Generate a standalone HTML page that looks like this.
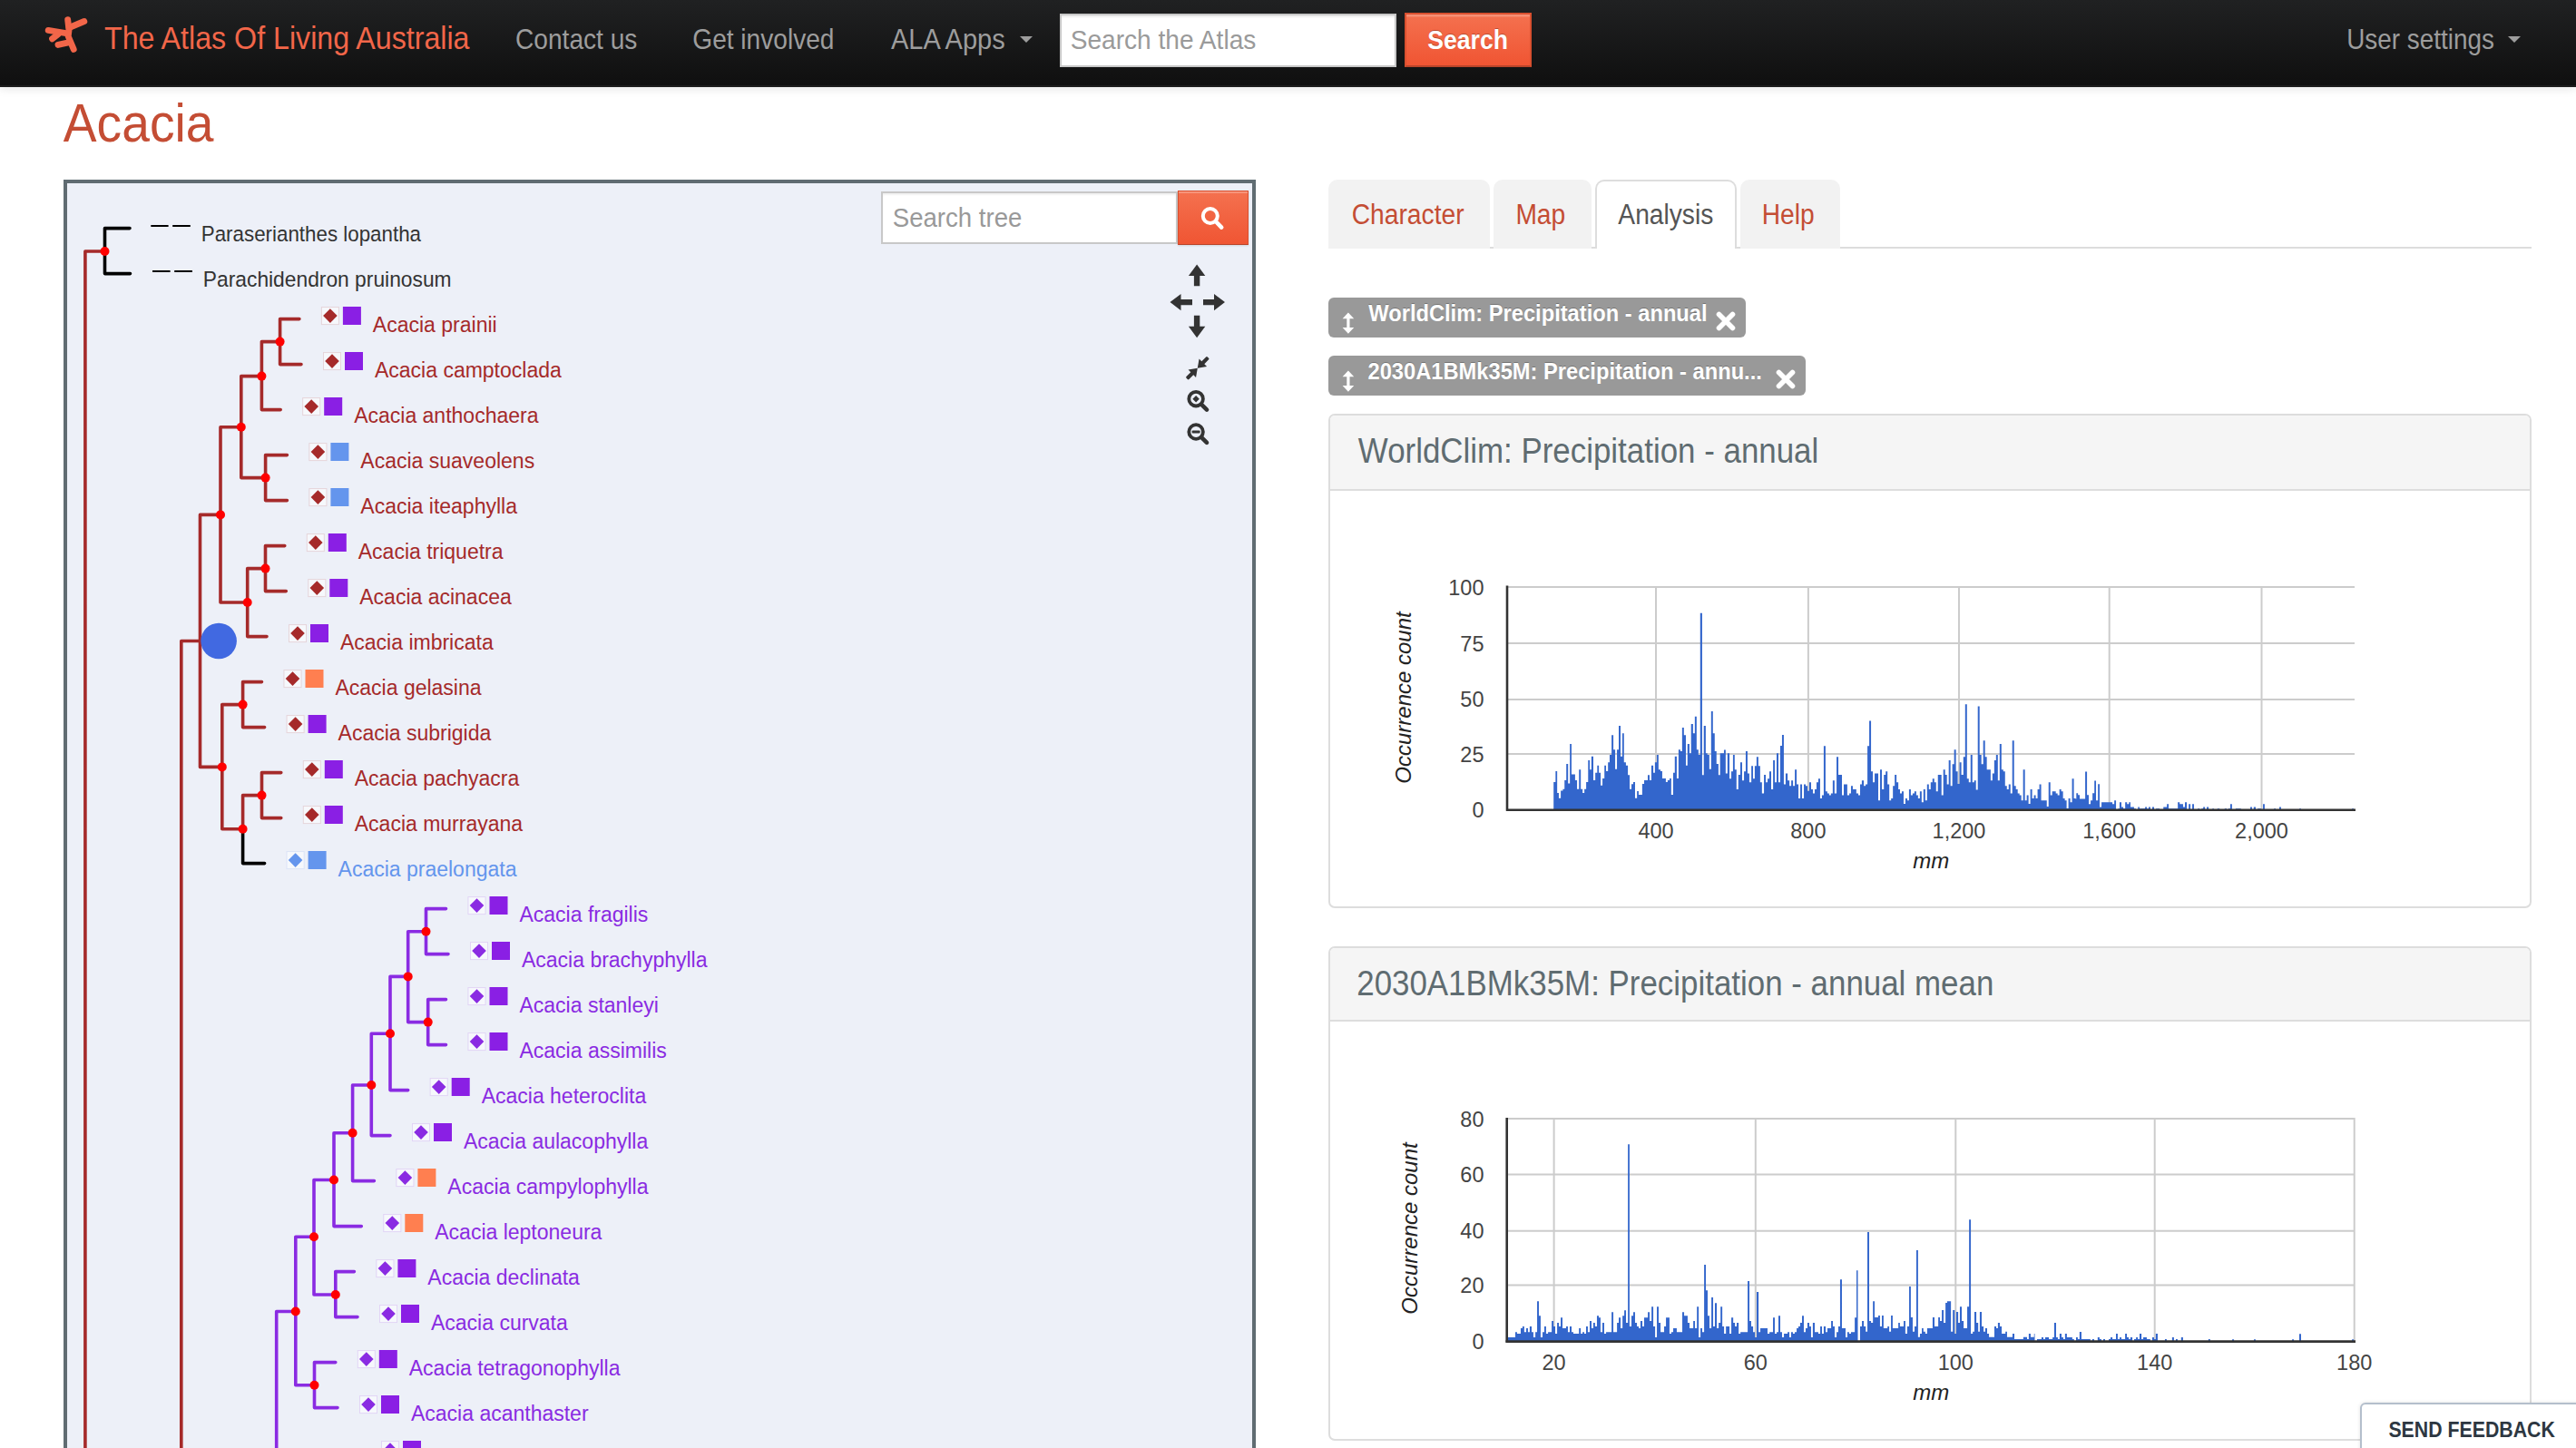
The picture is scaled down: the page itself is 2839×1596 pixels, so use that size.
<!DOCTYPE html><html><head><meta charset="utf-8"><style>
html,body{margin:0;padding:0;background:#fff;}
body{width:2839px;height:1596px;overflow:hidden;position:relative;font-family:"Liberation Sans",sans-serif;}
.t{position:absolute;white-space:nowrap;line-height:1;font-family:"Liberation Sans",sans-serif;}
</style></head><body>
<div style="position:absolute;left:0;top:0;width:2839px;height:96px;background:linear-gradient(#202122,#0f0f0f);box-shadow:0 2px 10px rgba(0,0,0,0.10);"></div>
<div style="position:absolute;left:0px;top:94px;width:2839px;height:2px;background:#1c1c1c;"></div>
<svg style="position:absolute;left:0;top:0" width="120" height="96"><g stroke="#f26649" stroke-width="6.9" stroke-linecap="round" stroke-linejoin="round" fill="none">
<path d="M74.7 21.8 L76 33 L75.2 40 L81.2 54.3"/>
<path d="M76.2 30.5 L92.8 23.5"/>
<path d="M53.2 33.4 L74.2 36.8"/>
<path d="M57.6 42.8 L64 37.8"/>
<path d="M64 49.4 L75.4 46.8"/>
</g></svg>
<div class="t" style="left:114.98px;top:26.94px;font-size:32.2px;color:#f26649;font-weight:normal;font-style:normal;transform:scaleY(1.09);transform-origin:0 27.26px;">The Atlas Of Living Australia</div>
<div class="t" style="left:568.07px;top:30.51px;font-size:28.1px;color:#9d9d9d;font-weight:normal;font-style:normal;transform:scaleY(1.1);transform-origin:0 23.79px;">Contact us</div>
<div class="t" style="left:763.29px;top:30.51px;font-size:28.1px;color:#9d9d9d;font-weight:normal;font-style:normal;transform:scaleY(1.1);transform-origin:0 23.79px;">Get involved</div>
<div class="t" style="left:981.94px;top:29.75px;font-size:29px;color:#9d9d9d;font-weight:normal;font-style:normal;transform:scaleY(1.1);transform-origin:0 24.55px;">ALA Apps</div>
<svg style="position:absolute;left:1122px;top:38px" width="18" height="12"><path d="M2 2 L16 2 L9 9 Z" fill="#9d9d9d"/></svg>
<div style="position:absolute;left:1168px;top:14.5px;width:367px;height:55px;background:#fff;border:2px solid #c8c8c8;box-shadow:inset 0 2px 2px rgba(0,0,0,.08)"></div>
<div class="t" style="left:1179.72px;top:31.21px;font-size:28.1px;color:#9a9a9a;font-weight:normal;font-style:normal;transform:scaleY(1.08);transform-origin:0 23.79px;">Search the Atlas</div>
<div style="position:absolute;left:1548px;top:13.9px;width:140px;height:60px;box-sizing:border-box;background:linear-gradient(#f4714f,#f05533);border:2px solid #d9502f;border-bottom-color:#b9442a;box-shadow:inset 0 2.5px 0 rgba(255,255,255,.22)"></div>
<div class="t" style="left:1573.23px;top:31.98px;font-size:26.6px;color:#ffffff;font-weight:bold;font-style:normal;transform:scaleY(1.1);transform-origin:0 22.52px;text-shadow:0 -1px 0 rgba(0,0,0,.25);">Search</div>
<div class="t" style="left:2586.15px;top:30.88px;font-size:27.9px;color:#9d9d9d;font-weight:normal;font-style:normal;transform:scaleY(1.11);transform-origin:0 23.62px;">User settings</div>
<svg style="position:absolute;left:2762px;top:38px" width="18" height="12"><path d="M2 2 L16 2 L9 9 Z" fill="#9d9d9d"/></svg>
<div class="t" style="left:69.79px;top:109.66px;font-size:55.2px;color:#c44d34;font-weight:normal;font-style:normal;transform:scaleY(1.08);transform-origin:0 46.74px;">Acacia</div>
<div style="position:absolute;left:70px;top:198px;width:1306px;height:1500px;border:4px solid #606c72;background:#edf0f8;"></div>
<div style="position:absolute;left:970.5px;top:210.5px;width:323px;height:54.5px;background:#fff;border:2px solid #c8c8c8;box-shadow:inset 0 2px 2px rgba(0,0,0,.06)"></div>
<div class="t" style="left:983.75px;top:227.13px;font-size:27.6px;color:#999;font-weight:normal;font-style:normal;transform:scaleY(1.08);transform-origin:0 23.37px;">Search tree</div>
<div style="position:absolute;left:1297.5px;top:210px;width:78px;height:60px;box-sizing:border-box;background:linear-gradient(#f4714f,#f05533);border:1.5px solid #d9502f;border-bottom-color:#b9442a;box-shadow:inset 0 2px 0 rgba(255,255,255,.25),0 1px 2px rgba(0,0,0,.12)"></div>
<svg style="position:absolute;left:1300px;top:215px" width="72" height="50"><g fill="none" stroke="#fff" stroke-linecap="round"><circle cx="33.8" cy="23" r="8" stroke-width="4"/><path d="M40.3 29.5 L46.2 35.6" stroke-width="4.6"/></g></svg>
<svg style="position:absolute;left:1280px;top:285px" width="80" height="215"><g fill="#333">
<path d="M39.1 6.4 L48.3 19 L42.3 19 L42.3 30.3 L35.9 30.3 L35.9 19 L29.9 19 Z"/>
<path d="M39.1 87.3 L48.3 74.7 L42.3 74.7 L42.3 62.7 L35.9 62.7 L35.9 74.7 L29.9 74.7 Z"/>
<path d="M9.5 48.1 L21.5 39 L21.5 45 L34 45 L34 51.2 L21.5 51.2 L21.5 57.2 Z"/>
<path d="M70 48.1 L58 39 L58 45 L46 45 L46 51.2 L58 51.2 L58 57.2 Z"/>
</g>
<g transform="translate(39.8,120.7) rotate(-45)" fill="#333"><rect x="-16.5" y="-2.1" width="9.5" height="4.2" rx="1.2"/><path d="M0 0L-8.5 -6L-8.5 6Z"/><rect x="7" y="-2.1" width="9.5" height="4.2" rx="1.2"/><path d="M0 0L8.5 -6L8.5 6Z"/></g>
<g fill="none" stroke="#333" stroke-linecap="round">
<circle cx="38.1" cy="154.7" r="7.8" stroke-width="3.8"/><path d="M44.2 160.8 L50 166.6" stroke-width="4.6"/>
<circle cx="38.1" cy="191" r="7.8" stroke-width="3.8"/><path d="M44.2 197.1 L50 202.9" stroke-width="4.6"/>
</g>
<g fill="#333"><path d="M38.1 151L41.8 154.7L38.1 158.4L34.4 154.7Z"/><rect x="33.6" y="189.4" width="9" height="3.2" rx="1"/></g>
</svg>
<svg style="position:absolute;left:0;top:0" width="1380" height="1596">
<path d="M93.9 277L93.9 1700M93.9 277L115.5 277M199.8 706.5L199.8 1700M199.8 706.5L220.5 706.5M220.5 567.4L220.5 845.4M220.5 567.4L243 567.4M220.5 845.4L244.8 845.4M243 470.8L243 664M243 470.8L265.8 470.8M243 664L272.7 664M265.8 414.6L265.8 526.6M265.8 414.6L288.4 414.6M265.8 526.6L292.6 526.6M288.4 376.6L288.4 451.6M288.4 376.6L308.6 376.6M288.4 451.6L309.2 451.6M308.6 351.6L308.6 401.6M308.6 351.6L329.9 351.6M308.6 401.6L332 401.6M292.6 501.6L292.6 551.6M292.6 501.6L316.4 501.6M292.6 551.6L316.4 551.6M272.7 626.6L272.7 701.6M272.7 626.6L292.5 626.6M272.7 701.6L294 701.6M292.5 601.6L292.5 651.6M292.5 601.6L313.8 601.6M292.5 651.6L315.3 651.6M244.8 776.6L244.8 913.8M244.8 776.6L267.6 776.6M244.8 913.8L267.6 913.8M267.6 751.6L267.6 801.6M267.6 751.6L288.5 751.6M267.6 801.6L291.6 801.6M267.6 876.6L267.6 913.8M267.6 876.6L288.5 876.6M288.5 851.6L288.5 901.6M288.5 851.6L309.8 851.6M288.5 901.6L309.8 901.6" stroke="#a52a2a" stroke-width="3.6" stroke-linecap="round" fill="none"/>
<path d="M304.7 1445.5L304.7 1700M304.7 1445.5L325.8 1445.5M325.8 1363.3L325.8 1526.8M325.8 1363.3L346 1363.3M325.8 1526.8L346.5 1526.8M346 1300.5L346 1427M346 1300.5L368 1300.5M346 1427L369.8 1427M368 1248.7L368 1351.6M368 1248.7L388.6 1248.7M368 1351.6L398.3 1351.6M388.6 1196L388.6 1301.6M388.6 1196L409.3 1196M388.6 1301.6L412.4 1301.6M409.3 1139.3L409.3 1251.6M409.3 1139.3L430 1139.3M409.3 1251.6L430 1251.6M430 1076.4L430 1201.6M430 1076.4L449.7 1076.4M430 1201.6L449.7 1201.6M449.7 1026.8L449.7 1126.6M449.7 1026.8L469.5 1026.8M449.7 1126.6L471.7 1126.6M469.5 1001.6L469.5 1051.6M469.5 1001.6L491.5 1001.6M469.5 1051.6L494 1051.6M471.7 1101.6L471.7 1151.6M471.7 1101.6L491.5 1101.6M471.7 1151.6L491.5 1151.6M369.8 1401.6L369.8 1451.6M369.8 1401.6L390.4 1401.6M369.8 1451.6L394 1451.6M346.5 1501.6L346.5 1551.6M346.5 1501.6L369.8 1501.6M346.5 1551.6L372 1551.6" stroke="#8a2be2" stroke-width="3.6" stroke-linecap="round" fill="none"/>
<path d="M115.5 251.6L115.5 301.6M115.5 251.6L143 251.6M115.5 301.6L143.5 301.6M267.6 913.8L267.6 951.6M267.6 951.6L291.6 951.6" stroke="#000" stroke-width="3.6" stroke-linecap="round" fill="none"/>
<path d="M166.3 249H185.6M190.2 249H209.8M168 299H187.6M192.2 299H211.9" stroke="#000" stroke-width="2.2"/>
<circle cx="115.5" cy="277" r="5" fill="#f00"/>
<circle cx="243" cy="567.4" r="5" fill="#f00"/>
<circle cx="265.8" cy="470.8" r="5" fill="#f00"/>
<circle cx="288.4" cy="414.6" r="5" fill="#f00"/>
<circle cx="308.6" cy="376.6" r="5" fill="#f00"/>
<circle cx="292.6" cy="526.6" r="5" fill="#f00"/>
<circle cx="272.7" cy="664" r="5" fill="#f00"/>
<circle cx="292.5" cy="626.6" r="5" fill="#f00"/>
<circle cx="244.8" cy="845.4" r="5" fill="#f00"/>
<circle cx="267.6" cy="776.6" r="5" fill="#f00"/>
<circle cx="267.6" cy="913.8" r="5" fill="#f00"/>
<circle cx="288.5" cy="876.6" r="5" fill="#f00"/>
<circle cx="325.8" cy="1445.5" r="5" fill="#f00"/>
<circle cx="346" cy="1363.3" r="5" fill="#f00"/>
<circle cx="368" cy="1300.5" r="5" fill="#f00"/>
<circle cx="388.6" cy="1248.7" r="5" fill="#f00"/>
<circle cx="409.3" cy="1196" r="5" fill="#f00"/>
<circle cx="430" cy="1139.3" r="5" fill="#f00"/>
<circle cx="449.7" cy="1076.4" r="5" fill="#f00"/>
<circle cx="469.5" cy="1026.8" r="5" fill="#f00"/>
<circle cx="471.7" cy="1126.6" r="5" fill="#f00"/>
<circle cx="369.8" cy="1427" r="5" fill="#f00"/>
<circle cx="346.5" cy="1526.8" r="5" fill="#f00"/>
<circle cx="241.1" cy="706.5" r="19.8" fill="#4169e1"/>
<rect x="354.4" y="338.6" width="19" height="19" fill="rgba(255,255,255,0.5)" stroke="rgba(165,42,42,0.15)" stroke-width="1"/>
<path d="M363.9 340.3L371.7 348.1L363.9 355.90000000000003L356.09999999999997 348.1Z" fill="#a52a2a"/>
<rect x="377.9" y="338.0" width="20" height="20" fill="#8a1fe4"/>
<rect x="356.5" y="388.6" width="19" height="19" fill="rgba(255,255,255,0.5)" stroke="rgba(165,42,42,0.15)" stroke-width="1"/>
<path d="M366 390.3L373.8 398.1L366 405.90000000000003L358.2 398.1Z" fill="#a52a2a"/>
<rect x="380" y="388.0" width="20" height="20" fill="#8a1fe4"/>
<rect x="333.7" y="438.6" width="19" height="19" fill="rgba(255,255,255,0.5)" stroke="rgba(165,42,42,0.15)" stroke-width="1"/>
<path d="M343.2 440.3L351.0 448.1L343.2 455.90000000000003L335.4 448.1Z" fill="#a52a2a"/>
<rect x="357.2" y="438.0" width="20" height="20" fill="#8a1fe4"/>
<rect x="340.9" y="488.6" width="19" height="19" fill="rgba(255,255,255,0.5)" stroke="rgba(165,42,42,0.15)" stroke-width="1"/>
<path d="M350.4 490.3L358.2 498.1L350.4 505.90000000000003L342.59999999999997 498.1Z" fill="#a52a2a"/>
<rect x="364.4" y="488.0" width="20" height="20" fill="#6495ed"/>
<rect x="340.9" y="538.6" width="19" height="19" fill="rgba(255,255,255,0.5)" stroke="rgba(165,42,42,0.15)" stroke-width="1"/>
<path d="M350.4 540.3000000000001L358.2 548.1L350.4 555.9L342.59999999999997 548.1Z" fill="#a52a2a"/>
<rect x="364.4" y="538.0" width="20" height="20" fill="#6495ed"/>
<rect x="338.3" y="588.6" width="19" height="19" fill="rgba(255,255,255,0.5)" stroke="rgba(165,42,42,0.15)" stroke-width="1"/>
<path d="M347.8 590.3000000000001L355.6 598.1L347.8 605.9L340.0 598.1Z" fill="#a52a2a"/>
<rect x="361.8" y="588.0" width="20" height="20" fill="#8a1fe4"/>
<rect x="339.8" y="638.6" width="19" height="19" fill="rgba(255,255,255,0.5)" stroke="rgba(165,42,42,0.15)" stroke-width="1"/>
<path d="M349.3 640.3000000000001L357.1 648.1L349.3 655.9L341.5 648.1Z" fill="#a52a2a"/>
<rect x="363.3" y="638.0" width="20" height="20" fill="#8a1fe4"/>
<rect x="318.5" y="688.6" width="19" height="19" fill="rgba(255,255,255,0.5)" stroke="rgba(165,42,42,0.15)" stroke-width="1"/>
<path d="M328 690.3000000000001L335.8 698.1L328 705.9L320.2 698.1Z" fill="#a52a2a"/>
<rect x="342" y="688.0" width="20" height="20" fill="#8a1fe4"/>
<rect x="313.0" y="738.6" width="19" height="19" fill="rgba(255,255,255,0.5)" stroke="rgba(165,42,42,0.15)" stroke-width="1"/>
<path d="M322.5 740.3000000000001L330.3 748.1L322.5 755.9L314.7 748.1Z" fill="#a52a2a"/>
<rect x="336.5" y="738.0" width="20" height="20" fill="#ff7f50"/>
<rect x="316.1" y="788.6" width="19" height="19" fill="rgba(255,255,255,0.5)" stroke="rgba(165,42,42,0.15)" stroke-width="1"/>
<path d="M325.6 790.3000000000001L333.40000000000003 798.1L325.6 805.9L317.8 798.1Z" fill="#a52a2a"/>
<rect x="339.6" y="788.0" width="20" height="20" fill="#8a1fe4"/>
<rect x="334.3" y="838.6" width="19" height="19" fill="rgba(255,255,255,0.5)" stroke="rgba(165,42,42,0.15)" stroke-width="1"/>
<path d="M343.8 840.3000000000001L351.6 848.1L343.8 855.9L336.0 848.1Z" fill="#a52a2a"/>
<rect x="357.8" y="838.0" width="20" height="20" fill="#8a1fe4"/>
<rect x="334.3" y="888.6" width="19" height="19" fill="rgba(255,255,255,0.5)" stroke="rgba(165,42,42,0.15)" stroke-width="1"/>
<path d="M343.8 890.3000000000001L351.6 898.1L343.8 905.9L336.0 898.1Z" fill="#a52a2a"/>
<rect x="357.8" y="888.0" width="20" height="20" fill="#8a1fe4"/>
<rect x="316.1" y="938.6" width="19" height="19" fill="rgba(255,255,255,0.5)" stroke="rgba(100,149,237,0.15)" stroke-width="1"/>
<path d="M325.6 940.3000000000001L333.40000000000003 948.1L325.6 955.9L317.8 948.1Z" fill="#6495ed"/>
<rect x="339.6" y="938.0" width="20" height="20" fill="#6495ed"/>
<rect x="516.0" y="988.6" width="19" height="19" fill="rgba(255,255,255,0.5)" stroke="rgba(138,43,226,0.15)" stroke-width="1"/>
<path d="M525.5 990.3000000000001L533.3 998.1L525.5 1005.9L517.7 998.1Z" fill="#8a2be2"/>
<rect x="539.5" y="988.0" width="20" height="20" fill="#8a1fe4"/>
<rect x="518.5" y="1038.6" width="19" height="19" fill="rgba(255,255,255,0.5)" stroke="rgba(138,43,226,0.15)" stroke-width="1"/>
<path d="M528 1040.3L535.8 1048.1L528 1055.8999999999999L520.2 1048.1Z" fill="#8a2be2"/>
<rect x="542" y="1038.0" width="20" height="20" fill="#8a1fe4"/>
<rect x="516.0" y="1088.6" width="19" height="19" fill="rgba(255,255,255,0.5)" stroke="rgba(138,43,226,0.15)" stroke-width="1"/>
<path d="M525.5 1090.3L533.3 1098.1L525.5 1105.8999999999999L517.7 1098.1Z" fill="#8a2be2"/>
<rect x="539.5" y="1088.0" width="20" height="20" fill="#8a1fe4"/>
<rect x="516.0" y="1138.6" width="19" height="19" fill="rgba(255,255,255,0.5)" stroke="rgba(138,43,226,0.15)" stroke-width="1"/>
<path d="M525.5 1140.3L533.3 1148.1L525.5 1155.8999999999999L517.7 1148.1Z" fill="#8a2be2"/>
<rect x="539.5" y="1138.0" width="20" height="20" fill="#8a1fe4"/>
<rect x="474.2" y="1188.6" width="19" height="19" fill="rgba(255,255,255,0.5)" stroke="rgba(138,43,226,0.15)" stroke-width="1"/>
<path d="M483.7 1190.3L491.5 1198.1L483.7 1205.8999999999999L475.9 1198.1Z" fill="#8a2be2"/>
<rect x="497.7" y="1188.0" width="20" height="20" fill="#8a1fe4"/>
<rect x="454.5" y="1238.6" width="19" height="19" fill="rgba(255,255,255,0.5)" stroke="rgba(138,43,226,0.15)" stroke-width="1"/>
<path d="M464 1240.3L471.8 1248.1L464 1255.8999999999999L456.2 1248.1Z" fill="#8a2be2"/>
<rect x="478" y="1238.0" width="20" height="20" fill="#8a1fe4"/>
<rect x="436.9" y="1288.6" width="19" height="19" fill="rgba(255,255,255,0.5)" stroke="rgba(138,43,226,0.15)" stroke-width="1"/>
<path d="M446.4 1290.3L454.2 1298.1L446.4 1305.8999999999999L438.59999999999997 1298.1Z" fill="#8a2be2"/>
<rect x="460.4" y="1288.0" width="20" height="20" fill="#ff7f50"/>
<rect x="422.8" y="1338.6" width="19" height="19" fill="rgba(255,255,255,0.5)" stroke="rgba(138,43,226,0.15)" stroke-width="1"/>
<path d="M432.3 1340.3L440.1 1348.1L432.3 1355.8999999999999L424.5 1348.1Z" fill="#8a2be2"/>
<rect x="446.3" y="1338.0" width="20" height="20" fill="#ff7f50"/>
<rect x="414.9" y="1388.6" width="19" height="19" fill="rgba(255,255,255,0.5)" stroke="rgba(138,43,226,0.15)" stroke-width="1"/>
<path d="M424.4 1390.3L432.2 1398.1L424.4 1405.8999999999999L416.59999999999997 1398.1Z" fill="#8a2be2"/>
<rect x="438.4" y="1388.0" width="20" height="20" fill="#8a1fe4"/>
<rect x="418.5" y="1438.6" width="19" height="19" fill="rgba(255,255,255,0.5)" stroke="rgba(138,43,226,0.15)" stroke-width="1"/>
<path d="M428 1440.3L435.8 1448.1L428 1455.8999999999999L420.2 1448.1Z" fill="#8a2be2"/>
<rect x="442" y="1438.0" width="20" height="20" fill="#8a1fe4"/>
<rect x="394.3" y="1488.6" width="19" height="19" fill="rgba(255,255,255,0.5)" stroke="rgba(138,43,226,0.15)" stroke-width="1"/>
<path d="M403.8 1490.3L411.6 1498.1L403.8 1505.8999999999999L396.0 1498.1Z" fill="#8a2be2"/>
<rect x="417.8" y="1488.0" width="20" height="20" fill="#8a1fe4"/>
<rect x="396.5" y="1538.6" width="19" height="19" fill="rgba(255,255,255,0.5)" stroke="rgba(138,43,226,0.15)" stroke-width="1"/>
<path d="M406 1540.3L413.8 1548.1L406 1555.8999999999999L398.2 1548.1Z" fill="#8a2be2"/>
<rect x="420" y="1538.0" width="20" height="20" fill="#8a1fe4"/>
<rect x="420.5" y="1588.6" width="19" height="19" fill="rgba(255,255,255,0.5)" stroke="rgba(138,43,226,0.15)" stroke-width="1"/>
<path d="M430 1590.3L437.8 1598.1L430 1605.8999999999999L422.2 1598.1Z" fill="#8a2be2"/>
<rect x="444" y="1588.0" width="20" height="20" fill="#8a1fe4"/>
</svg>
<div class="t" style="left:221.77px;top:247.78px;font-size:22.35px;color:#333;font-weight:normal;font-style:normal;transform:scaleY(1.03);transform-origin:0 18.92px;">Paraserianthes lopantha</div>
<div class="t" style="left:223.83px;top:297.40px;font-size:22.8px;color:#333;font-weight:normal;font-style:normal;transform:scaleY(1.03);transform-origin:0 19.30px;">Parachidendron pruinosum</div>
<div class="t" style="left:410.86px;top:347.33px;font-size:23.0px;color:#a52a2a;font-weight:normal;font-style:normal;">Acacia prainii</div>
<div class="t" style="left:412.96px;top:397.33px;font-size:23.0px;color:#a52a2a;font-weight:normal;font-style:normal;">Acacia camptoclada</div>
<div class="t" style="left:390.16px;top:447.33px;font-size:23.0px;color:#a52a2a;font-weight:normal;font-style:normal;">Acacia anthochaera</div>
<div class="t" style="left:397.36px;top:497.33px;font-size:23.0px;color:#a52a2a;font-weight:normal;font-style:normal;">Acacia suaveolens</div>
<div class="t" style="left:397.36px;top:547.33px;font-size:23.0px;color:#a52a2a;font-weight:normal;font-style:normal;">Acacia iteaphylla</div>
<div class="t" style="left:394.76px;top:597.33px;font-size:23.0px;color:#a52a2a;font-weight:normal;font-style:normal;">Acacia triquetra</div>
<div class="t" style="left:396.26px;top:647.33px;font-size:23.0px;color:#a52a2a;font-weight:normal;font-style:normal;">Acacia acinacea</div>
<div class="t" style="left:374.96px;top:697.33px;font-size:23.0px;color:#a52a2a;font-weight:normal;font-style:normal;">Acacia imbricata</div>
<div class="t" style="left:369.46px;top:747.33px;font-size:23.0px;color:#a52a2a;font-weight:normal;font-style:normal;">Acacia gelasina</div>
<div class="t" style="left:372.56px;top:797.33px;font-size:23.0px;color:#a52a2a;font-weight:normal;font-style:normal;">Acacia subrigida</div>
<div class="t" style="left:390.76px;top:847.33px;font-size:23.0px;color:#a52a2a;font-weight:normal;font-style:normal;">Acacia pachyacra</div>
<div class="t" style="left:390.76px;top:897.33px;font-size:23.0px;color:#a52a2a;font-weight:normal;font-style:normal;">Acacia murrayana</div>
<div class="t" style="left:372.56px;top:947.33px;font-size:23.0px;color:#6495ed;font-weight:normal;font-style:normal;">Acacia praelongata</div>
<div class="t" style="left:572.46px;top:997.33px;font-size:23.0px;color:#8a2be2;font-weight:normal;font-style:normal;">Acacia fragilis</div>
<div class="t" style="left:574.96px;top:1047.33px;font-size:23.0px;color:#8a2be2;font-weight:normal;font-style:normal;">Acacia brachyphylla</div>
<div class="t" style="left:572.46px;top:1097.33px;font-size:23.0px;color:#8a2be2;font-weight:normal;font-style:normal;">Acacia stanleyi</div>
<div class="t" style="left:572.46px;top:1147.33px;font-size:23.0px;color:#8a2be2;font-weight:normal;font-style:normal;">Acacia assimilis</div>
<div class="t" style="left:530.66px;top:1197.33px;font-size:23.0px;color:#8a2be2;font-weight:normal;font-style:normal;">Acacia heteroclita</div>
<div class="t" style="left:510.96px;top:1247.33px;font-size:23.0px;color:#8a2be2;font-weight:normal;font-style:normal;">Acacia aulacophylla</div>
<div class="t" style="left:493.36px;top:1297.33px;font-size:23.0px;color:#8a2be2;font-weight:normal;font-style:normal;">Acacia campylophylla</div>
<div class="t" style="left:479.26px;top:1347.33px;font-size:23.0px;color:#8a2be2;font-weight:normal;font-style:normal;">Acacia leptoneura</div>
<div class="t" style="left:471.36px;top:1397.33px;font-size:23.0px;color:#8a2be2;font-weight:normal;font-style:normal;">Acacia declinata</div>
<div class="t" style="left:474.96px;top:1447.33px;font-size:23.0px;color:#8a2be2;font-weight:normal;font-style:normal;">Acacia curvata</div>
<div class="t" style="left:450.76px;top:1497.33px;font-size:23.0px;color:#8a2be2;font-weight:normal;font-style:normal;">Acacia tetragonophylla</div>
<div class="t" style="left:452.96px;top:1547.33px;font-size:23.0px;color:#8a2be2;font-weight:normal;font-style:normal;">Acacia acanthaster</div>
<div style="position:absolute;left:1464px;top:272px;width:1326px;height:2px;background:#ddd;"></div>
<div style="position:absolute;left:1463.8px;top:198px;width:178.2px;height:75.6px;background:#f2f2f2;border-radius:10px 10px 0 0"></div>
<div class="t" style="left:1489.77px;top:223.12px;font-size:28.2px;color:#c44d34;font-weight:normal;font-style:normal;transform:scaleY(1.08);transform-origin:0 23.88px;">Character</div>
<div style="position:absolute;left:1646.2px;top:198px;width:107.5px;height:75.6px;background:#f2f2f2;border-radius:10px 10px 0 0"></div>
<div class="t" style="left:1670.39px;top:223.12px;font-size:28.2px;color:#c44d34;font-weight:normal;font-style:normal;transform:scaleY(1.08);transform-origin:0 23.88px;">Map</div>
<div style="position:absolute;left:1918px;top:198px;width:109.5px;height:75.6px;background:#f2f2f2;border-radius:10px 10px 0 0"></div>
<div class="t" style="left:1941.69px;top:223.12px;font-size:28.2px;color:#c44d34;font-weight:normal;font-style:normal;transform:scaleY(1.08);transform-origin:0 23.88px;">Help</div>
<div style="position:absolute;left:1758.2px;top:198px;width:151.4px;height:74px;background:#fff;border:2px solid #ddd;border-bottom:none;border-radius:10px 10px 0 0"></div>
<div class="t" style="left:1783.34px;top:223.12px;font-size:28.2px;color:#555;font-weight:normal;font-style:normal;transform:scaleY(1.08);transform-origin:0 23.88px;">Analysis</div>
<div style="position:absolute;left:1464px;top:328.2px;width:459.7px;height:43.4px;background:#999;border-radius:6px"></div>
<svg style="position:absolute;left:1476px;top:343.9px" width="20" height="26"><g fill="#fff"><path d="M9.9 0.5L16.2 7.2H11.5V17.1H16.2L9.9 23.8L3.6 17.1H8.3V7.2H3.6Z"/></g></svg>
<div class="t" style="left:1508.28px;top:335.43px;font-size:23.7px;color:#fff;font-weight:bold;font-style:normal;transform:scaleY(1.12);transform-origin:0 20.07px;text-shadow:0 -1px 0 rgba(0,0,0,.25);">WorldClim: Precipitation - annual</div>
<svg style="position:absolute;left:1889.9px;top:341.5px" width="24" height="24"><path d="M4.5 4.5L19.5 19.5M19.5 4.5L4.5 19.5" stroke="#fff" stroke-width="5.6" stroke-linecap="round"/></svg>
<div style="position:absolute;left:1464px;top:392.2px;width:525.7px;height:43.4px;background:#999;border-radius:6px"></div>
<svg style="position:absolute;left:1476px;top:407.9px" width="20" height="26"><g fill="#fff"><path d="M9.9 0.5L16.2 7.2H11.5V17.1H16.2L9.9 23.8L3.6 17.1H8.3V7.2H3.6Z"/></g></svg>
<div class="t" style="left:1507.48px;top:399.23px;font-size:23.7px;color:#fff;font-weight:bold;font-style:normal;transform:scaleY(1.12);transform-origin:0 20.07px;text-shadow:0 -1px 0 rgba(0,0,0,.25);">2030A1BMk35M: Precipitation - annu...</div>
<svg style="position:absolute;left:1956.0px;top:405.5px" width="24" height="24"><path d="M4.5 4.5L19.5 19.5M19.5 4.5L4.5 19.5" stroke="#fff" stroke-width="5.6" stroke-linecap="round"/></svg>
<div style="position:absolute;left:1464px;top:456px;width:1322px;height:540.5px;border:2px solid #ddd;border-radius:7px;background:#fff;overflow:hidden"><div style="height:80.6px;background:#f5f5f5;border-bottom:2px solid #ddd"></div></div>
<div class="t" style="left:1496.85px;top:481.05px;font-size:34.9px;color:#5f6c71;font-weight:normal;font-style:normal;transform:scaleY(1.09);transform-origin:0 29.55px;">WorldClim: Precipitation - annual</div>
<div style="position:absolute;left:1464px;top:1042.8px;width:1322px;height:541.5px;border:2px solid #ddd;border-radius:7px;background:#fff;overflow:hidden"><div style="height:79.2px;background:#f5f5f5;border-bottom:2px solid #ddd"></div></div>
<div class="t" style="left:1495.24px;top:1067.85px;font-size:34.9px;color:#5f6c71;font-weight:normal;font-style:normal;transform:scaleY(1.09);transform-origin:0 29.55px;">2030A1BMk35M: Precipitation - annual mean</div>
<div style="position:absolute;left:2600.5px;top:1545.5px;width:260px;height:60px;background:#fff;border:2px solid #b4bfcc;border-radius:6px;box-shadow:0 0 4px rgba(0,0,0,.12)"></div>
<div class="t" style="left:2632.39px;top:1566.57px;font-size:21.3px;color:#2d3741;font-weight:bold;font-style:normal;transform:scaleY(1.12);transform-origin:0 18.03px;">SEND FEEDBACK</div>
<svg style="position:absolute;left:0;top:0" width="2839" height="1596">
<path d="M1661 647H2595" stroke="#cccccc" stroke-width="2"/>
<path d="M1661 709.1H2595" stroke="#cccccc" stroke-width="2"/>
<path d="M1661 770.9H2595" stroke="#cccccc" stroke-width="2"/>
<path d="M1661 831H2595" stroke="#cccccc" stroke-width="2"/>
<path d="M1825 646V892" stroke="#cccccc" stroke-width="2"/>
<path d="M1992.9 646V892" stroke="#cccccc" stroke-width="2"/>
<path d="M2159 646V892" stroke="#cccccc" stroke-width="2"/>
<path d="M2324.7 646V892" stroke="#cccccc" stroke-width="2"/>
<path d="M2492.5 646V892" stroke="#cccccc" stroke-width="2"/>
<path d="M1712.21 893.20V862.04H1714.36V893.20ZM1714.36 893.20V850.01H1716.16V893.20ZM1716.16 893.20V873.89H1717.95V893.20ZM1717.95 893.20V879.63H1720.11V893.20ZM1720.11 893.20V871.55H1722.44V893.20ZM1722.44 893.20V869.76H1724.24V893.20ZM1724.24 893.20V859.88H1726.21V893.20ZM1726.21 893.20V841.93H1728.19V893.20ZM1728.19 893.20V863.47H1730.16V893.20ZM1730.16 893.20V820.03H1731.96V893.20ZM1731.96 893.20V853.60H1735.91V893.20ZM1735.91 893.20V859.88H1738.06V893.20ZM1738.06 893.20V869.76H1740.22V893.20ZM1740.22 893.20V848.21H1742.19V893.20ZM1742.19 893.20V869.76H1744.17V893.20ZM1744.17 893.20V873.89H1746.14V893.20ZM1746.14 893.20V869.76H1748.11V893.20ZM1748.11 893.20V862.04H1750.27V893.20ZM1750.27 893.20V837.98H1752.06V893.20ZM1752.06 893.20V848.21H1753.86V893.20ZM1753.86 893.20V833.85H1756.01V893.20ZM1756.01 893.20V859.88H1758.17V893.20ZM1758.17 893.20V851.81H1760.32V893.20ZM1760.32 893.20V843.73H1762.12V893.20ZM1762.12 893.20V851.81H1764.09V893.20ZM1764.09 893.20V865.81H1766.07V893.20ZM1766.07 893.20V858.09H1768.22V893.20ZM1768.22 893.20V843.73H1770.02V893.20ZM1770.02 893.20V850.01H1772.17V893.20ZM1772.17 893.20V840.14H1773.97V893.20ZM1773.97 893.20V832.06H1776.12V893.20ZM1776.12 893.20V810.15H1778.10V893.20ZM1778.10 893.20V826.13H1780.07V893.20ZM1780.07 893.20V847.86H1782.05V893.20ZM1782.05 893.20V826.13H1784.02V893.20ZM1784.02 893.20V800.10H1786.00V893.20ZM1786.00 893.20V833.85H1787.97V893.20ZM1787.97 893.20V808.18H1789.77V893.20ZM1789.77 893.20V840.14H1791.92V893.20ZM1791.92 893.20V843.73H1794.08V893.20ZM1794.08 893.20V854.14H1796.05V893.20ZM1796.05 893.20V869.76H1798.03V893.20ZM1798.03 893.20V864.37H1800.00V893.20ZM1800.00 893.20V862.04H1801.97V893.20ZM1801.97 893.20V879.63H1804.13V893.20ZM1804.13 893.20V872.09H1805.92V893.20ZM1805.92 893.20V876.04H1809.87V893.20ZM1809.87 893.20V864.01H1812.03V893.20ZM1812.03 893.20V859.88H1815.98V893.20ZM1815.98 893.20V854.14H1817.95V893.20ZM1817.95 893.20V859.88H1819.93V893.20ZM1819.93 893.20V843.73H1822.08V893.20ZM1822.08 893.20V851.81H1823.88V893.20ZM1823.88 893.20V840.14H1826.03V893.20ZM1826.03 893.20V832.06H1827.83V893.20ZM1827.83 893.20V848.21H1829.98V893.20ZM1829.98 893.20V850.01H1831.96V893.20ZM1831.96 893.20V858.09H1835.91V893.20ZM1835.91 893.20V862.04H1837.88V893.20ZM1837.88 893.20V859.88H1840.04V893.20ZM1840.04 893.20V858.09H1841.83V893.20ZM1841.83 893.20V876.04H1843.99V893.20ZM1843.99 893.20V851.81H1845.78V893.20ZM1845.78 893.20V833.85H1847.94V893.20ZM1847.94 893.20V858.09H1849.91V893.20ZM1849.91 893.20V826.13H1851.89V893.20ZM1851.89 893.20V828.11H1853.86V893.20ZM1853.86 893.20V802.07H1855.83V893.20ZM1855.83 893.20V810.15H1857.99V893.20ZM1857.99 893.20V843.73H1859.78V893.20ZM1859.78 893.20V820.03H1861.94V893.20ZM1861.94 893.20V830.26H1863.73V893.20ZM1863.73 893.20V797.95H1865.89V893.20ZM1865.89 893.20V808.18H1867.86V893.20ZM1867.86 893.20V789.87H1869.84V893.20ZM1869.84 893.20V826.13H1871.81V893.20ZM1871.81 893.20V832.06H1873.79V893.20ZM1873.79 893.20V675.86H1875.94V893.20ZM1875.94 893.20V854.14H1877.74V893.20ZM1877.74 893.20V800.10H1879.89V893.20ZM1879.89 893.20V830.26H1881.69V893.20ZM1881.69 893.20V832.06H1883.84V893.20ZM1883.84 893.20V847.86H1885.82V893.20ZM1885.82 893.20V783.94H1887.79V893.20ZM1887.79 893.20V808.18H1889.77V893.20ZM1889.77 893.20V828.11H1891.74V893.20ZM1891.74 893.20V841.93H1893.90V893.20ZM1893.90 893.20V854.14H1895.69V893.20ZM1895.69 893.20V830.26H1897.50V893.20ZM1897.50 893.20V830.32H1899.97V893.20ZM1899.97 893.20V826.45H1901.85V893.20ZM1901.85 893.20V852.42H1903.84V893.20ZM1903.84 893.20V830.32H1906.05V893.20ZM1906.05 893.20V858.28H1908.04V893.20ZM1908.04 893.20V850.21H1909.92V893.20ZM1909.92 893.20V831.98H1911.80V893.20ZM1911.80 893.20V848.33H1913.78V893.20ZM1913.78 893.20V870.10H1915.77V893.20ZM1915.77 893.20V854.08H1917.98V893.20ZM1917.98 893.20V840.27H1919.97V893.20ZM1919.97 893.20V860.16H1922.07V893.20ZM1922.07 893.20V850.21H1923.95V893.20ZM1923.95 893.20V828.11H1925.94V893.20ZM1925.94 893.20V852.42H1927.93V893.20ZM1927.93 893.20V862.37H1930.14V893.20ZM1930.14 893.20V844.13H1932.02V893.20ZM1932.02 893.20V858.28H1933.90V893.20ZM1933.90 893.20V844.13H1935.88V893.20ZM1935.88 893.20V834.19H1937.87V893.20ZM1937.87 893.20V844.13H1939.86V893.20ZM1939.86 893.20V862.37H1941.85V893.20ZM1941.85 893.20V874.52H1944.06V893.20ZM1944.06 893.20V854.08H1946.05V893.20ZM1946.05 893.20V862.37H1948.04V893.20ZM1948.04 893.20V858.28H1950.03V893.20ZM1950.03 893.20V850.21H1952.02V893.20ZM1952.02 893.20V870.10H1954.12V893.20ZM1954.12 893.20V838.06H1955.99V893.20ZM1955.99 893.20V862.37H1957.98V893.20ZM1957.98 893.20V830.32H1959.97V893.20ZM1959.97 893.20V862.37H1961.96V893.20ZM1961.96 893.20V822.03H1963.95V893.20ZM1963.95 893.20V810.10H1965.94V893.20ZM1965.94 893.20V864.58H1967.93V893.20ZM1967.93 893.20V852.42H1970.14V893.20ZM1970.14 893.20V860.16H1972.13V893.20ZM1972.13 893.20V866.23H1974.12V893.20ZM1974.12 893.20V860.16H1976.10V893.20ZM1976.10 893.20V866.23H1978.09V893.20ZM1978.09 893.20V848.33H1980.08V893.20ZM1980.08 893.20V864.58H1982.07V893.20ZM1982.07 893.20V880.05H1984.06V893.20ZM1984.06 893.20V864.58H1986.05V893.20ZM1986.05 893.20V880.05H1988.04V893.20ZM1988.04 893.20V864.58H1990.03V893.20ZM1990.03 893.20V866.23H1992.02V893.20ZM1992.02 893.20V871.76H1994.01V893.20ZM1994.01 893.20V862.37H1995.99V893.20ZM1995.99 893.20V870.10H1997.98V893.20ZM1997.98 893.20V874.52H1999.97V893.20ZM1999.97 893.20V870.10H2001.96V893.20ZM2001.96 893.20V862.37H2003.95V893.20ZM2003.95 893.20V858.28H2005.94V893.20ZM2005.94 893.20V880.05H2007.93V893.20ZM2007.93 893.20V876.40H2009.92V893.20ZM2009.92 893.20V822.26H2011.91V893.20ZM2011.91 893.20V872.31H2013.90V893.20ZM2013.90 893.20V874.52H2015.88V893.20ZM2015.88 893.20V876.40H2017.87V893.20ZM2017.87 893.20V874.52H2019.86V893.20ZM2019.86 893.20V860.16H2021.85V893.20ZM2021.85 893.20V874.52H2024.06V893.20ZM2024.06 893.20V834.19H2026.05V893.20ZM2026.05 893.20V854.08H2030.03V893.20ZM2030.03 893.20V876.40H2032.02V893.20ZM2032.02 893.20V864.58H2035.88V893.20ZM2035.88 893.20V876.40H2038.09V893.20ZM2038.09 893.20V874.52H2039.97V893.20ZM2039.97 893.20V866.23H2041.96V893.20ZM2041.96 893.20V870.10H2045.83V893.20ZM2045.83 893.20V874.52H2048.04V893.20ZM2048.04 893.20V876.40H2050.03V893.20ZM2050.03 893.20V864.58H2051.91V893.20ZM2051.91 893.20V860.16H2054.12V893.20ZM2054.12 893.20V866.23H2056.10V893.20ZM2056.10 893.20V864.58H2058.09V893.20ZM2058.09 893.20V822.26H2060.08V893.20ZM2060.08 893.20V794.41H2062.07V893.20ZM2062.07 893.20V850.21H2064.06V893.20ZM2064.06 893.20V862.37H2066.05V893.20ZM2066.05 893.20V852.42H2070.03V893.20ZM2070.03 893.20V882.26H2072.02V893.20ZM2072.02 893.20V848.33H2074.01V893.20ZM2074.01 893.20V870.10H2076.22V893.20ZM2076.22 893.20V854.08H2078.20V893.20ZM2078.20 893.20V850.21H2080.19V893.20ZM2080.19 893.20V864.58H2082.18V893.20ZM2082.18 893.20V882.26H2084.17V893.20ZM2084.17 893.20V880.05H2086.16V893.20ZM2086.16 893.20V866.23H2088.15V893.20ZM2088.15 893.20V854.08H2090.14V893.20ZM2090.14 893.20V862.37H2092.13V893.20ZM2092.13 893.20V870.10H2092.50V893.20ZM2092.50 893.20V870.10H2093.98V893.20ZM2093.98 893.20V874.52H2095.97V893.20ZM2095.97 893.20V872.31H2097.96V893.20ZM2097.96 893.20V886.12H2099.94V893.20ZM2099.94 893.20V880.05H2101.93V893.20ZM2101.93 893.20V882.26H2103.92V893.20ZM2103.92 893.20V870.10H2105.91V893.20ZM2105.91 893.20V876.40H2107.90V893.20ZM2107.90 893.20V874.52H2109.89V893.20ZM2109.89 893.20V872.31H2111.88V893.20ZM2111.88 893.20V876.40H2113.87V893.20ZM2113.87 893.20V880.05H2115.86V893.20ZM2115.86 893.20V872.31H2117.85V893.20ZM2117.85 893.20V884.13H2119.83V893.20ZM2119.83 893.20V870.10H2121.82V893.20ZM2121.82 893.20V882.26H2123.81V893.20ZM2123.81 893.20V864.58H2125.80V893.20ZM2125.80 893.20V870.10H2127.79V893.20ZM2127.79 893.20V862.37H2129.78V893.20ZM2129.78 893.20V858.28H2131.77V893.20ZM2131.77 893.20V862.37H2133.76V893.20ZM2133.76 893.20V872.31H2135.75V893.20ZM2135.75 893.20V854.08H2139.72V893.20ZM2139.72 893.20V876.40H2141.71V893.20ZM2141.71 893.20V848.33H2143.70V893.20ZM2143.70 893.20V854.08H2145.69V893.20ZM2145.69 893.20V864.58H2147.68V893.20ZM2147.68 893.20V838.06H2149.67V893.20ZM2149.67 893.20V866.23H2151.66V893.20ZM2151.66 893.20V842.14H2153.65V893.20ZM2153.65 893.20V826.23H2155.64V893.20ZM2155.64 893.20V850.21H2157.62V893.20ZM2157.62 893.20V864.02H2159.61V893.20ZM2159.61 893.20V840.27H2161.60V893.20ZM2161.60 893.20V854.08H2163.81V893.20ZM2163.81 893.20V834.19H2165.80V893.20ZM2165.80 893.20V776.18H2167.79V893.20ZM2167.79 893.20V858.28H2169.78V893.20ZM2169.78 893.20V862.37H2171.77V893.20ZM2171.77 893.20V831.98H2173.76V893.20ZM2173.76 893.20V862.37H2175.75V893.20ZM2175.75 893.20V860.16H2177.73V893.20ZM2177.73 893.20V870.43H2179.72V893.20ZM2179.72 893.20V778.39H2181.71V893.20ZM2181.71 893.20V831.98H2183.70V893.20ZM2183.70 893.20V842.14H2185.69V893.20ZM2185.69 893.20V816.29H2187.68V893.20ZM2187.68 893.20V834.19H2189.67V893.20ZM2189.67 893.20V848.33H2193.87V893.20ZM2193.87 893.20V860.16H2195.86V893.20ZM2195.86 893.20V852.42H2197.85V893.20ZM2197.85 893.20V838.06H2199.83V893.20ZM2199.83 893.20V831.98H2201.82V893.20ZM2201.82 893.20V860.16H2203.81V893.20ZM2203.81 893.20V820.05H2205.80V893.20ZM2205.80 893.20V848.33H2207.79V893.20ZM2207.79 893.20V850.21H2209.78V893.20ZM2209.78 893.20V866.23H2211.77V893.20ZM2211.77 893.20V870.10H2213.76V893.20ZM2213.76 893.20V864.58H2215.75V893.20ZM2215.75 893.20V874.52H2217.73V893.20ZM2217.73 893.20V816.29H2219.72V893.20ZM2219.72 893.20V866.23H2221.71V893.20ZM2221.71 893.20V870.10H2223.70V893.20ZM2223.70 893.20V874.52H2225.69V893.20ZM2225.69 893.20V876.40H2227.68V893.20ZM2227.68 893.20V882.26H2229.67V893.20ZM2229.67 893.20V848.33H2231.66V893.20ZM2231.66 893.20V882.26H2233.65V893.20ZM2233.65 893.20V876.40H2235.64V893.20ZM2235.64 893.20V886.12H2237.62V893.20ZM2237.62 893.20V870.10H2239.61V893.20ZM2239.61 893.20V880.05H2241.60V893.20ZM2241.60 893.20V876.40H2243.59V893.20ZM2243.59 893.20V880.05H2245.58V893.20ZM2245.58 893.20V870.10H2247.57V893.20ZM2247.57 893.20V864.58H2249.56V893.20ZM2249.56 893.20V882.26H2255.75V893.20ZM2255.75 893.20V888.89H2257.73V893.20ZM2257.73 893.20V862.37H2259.72V893.20ZM2259.72 893.20V876.40H2261.71V893.20ZM2261.71 893.20V872.31H2265.69V893.20ZM2265.69 893.20V874.52H2267.68V893.20ZM2267.68 893.20V876.40H2269.67V893.20ZM2269.67 893.20V870.10H2271.66V893.20ZM2271.66 893.20V872.31H2273.65V893.20ZM2273.65 893.20V880.05H2275.64V893.20ZM2275.64 893.20V882.26H2277.62V893.20ZM2277.62 893.20V891.10H2279.61V893.20ZM2279.61 893.20V880.05H2281.60V893.20ZM2281.60 893.20V884.13H2283.59V893.20ZM2283.59 893.20V858.28H2285.58V893.20ZM2285.58 893.20V880.05H2287.50V893.20ZM2287.50 893.20V880.44H2288.31V893.20ZM2288.31 893.20V874.22H2290.14V893.20ZM2290.14 893.20V876.29H2292.04V893.20ZM2292.04 893.20V880.44H2298.09V893.20ZM2298.09 893.20V850.44H2300.08V893.20ZM2300.08 893.20V876.29H2301.98V893.20ZM2301.98 893.20V886.23H2304.06V893.20ZM2304.06 893.20V882.26H2306.13V893.20ZM2306.13 893.20V874.22H2308.20V893.20ZM2308.20 893.20V860.39H2310.02V893.20ZM2310.02 893.20V882.26H2312.17V893.20ZM2312.17 893.20V864.28H2314.00V893.20ZM2314.00 893.20V889.38H2316.07V893.20ZM2316.07 893.20V884.16H2326.01V893.20ZM2326.01 893.20V884.16H2328.08V893.20ZM2328.08 893.20V886.23H2330.15V893.20ZM2330.15 893.20V882.26H2332.06V893.20ZM2334.30 893.20V891.21H2335.95V893.20ZM2335.95 893.20V884.16H2338.02V893.20ZM2338.02 893.20V889.38H2340.10V893.20ZM2340.10 893.20V891.21H2342.17V893.20ZM2342.17 893.20V884.16H2344.24V893.20ZM2344.24 893.20V886.23H2346.31V893.20ZM2346.31 893.20V884.16H2347.97V893.20ZM2347.97 893.20V889.38H2351.94V893.20ZM2351.94 893.20V891.21H2353.93V893.20ZM2356.25 893.20V889.38H2357.91V893.20ZM2357.91 893.20V891.21H2364.12V893.20ZM2364.12 893.20V889.38H2366.03V893.20ZM2366.03 893.20V891.21H2368.02V893.20ZM2368.02 893.20V889.38H2369.92V893.20ZM2371.99 893.20V889.38H2374.06V893.20ZM2376.14 893.20V891.21H2380.11V893.20ZM2384.25 893.20V889.38H2388.15V893.20ZM2388.15 893.20V886.23H2390.05V893.20ZM2390.05 893.20V891.21H2400.16V893.20ZM2400.16 893.20V884.16H2402.23V893.20ZM2402.23 893.20V886.23H2405.96V893.20ZM2405.96 893.20V889.38H2408.03V893.20ZM2408.03 893.20V884.16H2410.10V893.20ZM2412.17 893.20V886.23H2414.08V893.20ZM2416.07 893.20V886.23H2417.97V893.20ZM2422.12 893.20V891.21H2424.19V893.20ZM2426.26 893.20V891.21H2428.16V893.20ZM2428.16 893.20V889.38H2430.15V893.20ZM2432.06 893.20V889.38H2434.13V893.20ZM2438.27 893.20V891.21H2439.93V893.20ZM2443.73 893.20V891.27H2446.21V893.20ZM2451.80 893.20V891.27H2453.98V893.20ZM2455.84 893.20V891.27H2458.01V893.20ZM2458.01 893.20V886.30H2459.88V893.20ZM2463.91 893.20V891.27H2469.81V893.20ZM2480.06 893.20V889.40H2481.93V893.20ZM2483.79 893.20V889.40H2485.96V893.20ZM2488.14 893.20V891.27H2491.86V893.20ZM2494.04 893.20V886.30H2495.90V893.20ZM2506.15 893.20V891.27H2508.01V893.20ZM2512.05 893.20V889.40H2513.91V893.20ZM2534.10 893.20V891.27H2535.96V893.20ZM2592.17 893.20V891.27H2594.04V893.20Z" fill="#3366cc"/>
<path d="M1661 645.5V893.8" stroke="#333333" stroke-width="2.6"/>
<path d="M1660 892.7H2596" stroke="#333333" stroke-width="2.6"/>
<path d="M1661 1233H2595" stroke="#cccccc" stroke-width="2"/>
<path d="M1661 1294.6H2595" stroke="#cccccc" stroke-width="2"/>
<path d="M1661 1356.7H2595" stroke="#cccccc" stroke-width="2"/>
<path d="M1661 1416.6H2595" stroke="#cccccc" stroke-width="2"/>
<path d="M1712.6 1232V1478" stroke="#cccccc" stroke-width="2"/>
<path d="M1934.8 1232V1478" stroke="#cccccc" stroke-width="2"/>
<path d="M2155.3 1232V1478" stroke="#cccccc" stroke-width="2"/>
<path d="M2374.7 1232V1478" stroke="#cccccc" stroke-width="2"/>
<path d="M2594.7 1232V1478" stroke="#cccccc" stroke-width="2"/>
<path d="M1662.00 1479.00V1474.12H1669.98V1479.00ZM1669.98 1479.00V1468.14H1671.93V1479.00ZM1671.93 1479.00V1470.08H1675.96V1479.00ZM1675.96 1479.00V1464.10H1677.90V1479.00ZM1677.90 1479.00V1462.08H1679.84V1479.00ZM1679.84 1479.00V1468.14H1682.02V1479.00ZM1682.02 1479.00V1464.10H1683.96V1479.00ZM1683.96 1479.00V1468.14H1685.90V1479.00ZM1685.90 1479.00V1462.08H1688.00V1479.00ZM1688.00 1479.00V1468.14H1689.94V1479.00ZM1689.94 1479.00V1474.12H1692.11V1479.00ZM1692.11 1479.00V1468.14H1694.05V1479.00ZM1694.05 1479.00V1434.21H1695.99V1479.00ZM1695.99 1479.00V1450.28H1697.93V1479.00ZM1697.93 1479.00V1474.12H1700.03V1479.00ZM1700.03 1479.00V1468.14H1701.97V1479.00ZM1701.97 1479.00V1462.08H1703.91V1479.00ZM1703.91 1479.00V1470.08H1706.09V1479.00ZM1706.09 1479.00V1468.14H1710.12V1479.00ZM1710.12 1479.00V1456.11H1712.07V1479.00ZM1712.07 1479.00V1462.08H1714.01V1479.00ZM1714.01 1479.00V1470.08H1716.10V1479.00ZM1716.10 1479.00V1458.05H1718.04V1479.00ZM1718.04 1479.00V1462.08H1720.06V1479.00ZM1720.06 1479.00V1452.22H1722.00V1479.00ZM1722.00 1479.00V1464.10H1726.04V1479.00ZM1726.04 1479.00V1462.08H1727.98V1479.00ZM1727.98 1479.00V1468.14H1730.00V1479.00ZM1730.00 1479.00V1462.08H1732.02V1479.00ZM1732.02 1479.00V1468.14H1734.04V1479.00ZM1734.04 1479.00V1470.08H1740.17V1479.00ZM1740.17 1479.00V1464.10H1742.11V1479.00ZM1742.11 1479.00V1470.08H1744.13V1479.00ZM1744.13 1479.00V1468.14H1745.99V1479.00ZM1745.99 1479.00V1470.08H1748.01V1479.00ZM1748.01 1479.00V1462.08H1749.95V1479.00ZM1749.95 1479.00V1468.14H1752.05V1479.00ZM1752.05 1479.00V1456.11H1753.99V1479.00ZM1753.99 1479.00V1464.10H1755.93V1479.00ZM1755.93 1479.00V1458.05H1757.87V1479.00ZM1757.87 1479.00V1462.08H1759.97V1479.00ZM1759.97 1479.00V1450.28H1761.99V1479.00ZM1761.99 1479.00V1452.22H1763.93V1479.00ZM1763.93 1479.00V1468.14H1766.02V1479.00ZM1766.02 1479.00V1458.05H1767.97V1479.00ZM1767.97 1479.00V1470.08H1770.06V1479.00ZM1770.06 1479.00V1468.14H1776.12V1479.00ZM1776.12 1479.00V1446.25H1778.06V1479.00ZM1778.06 1479.00V1468.14H1782.10V1479.00ZM1782.10 1479.00V1458.05H1784.04V1479.00ZM1784.04 1479.00V1452.22H1786.06V1479.00ZM1786.06 1479.00V1464.10H1788.15V1479.00ZM1788.15 1479.00V1450.28H1790.09V1479.00ZM1790.09 1479.00V1444.23H1792.03V1479.00ZM1792.03 1479.00V1458.05H1794.13V1479.00ZM1794.13 1479.00V1261.31H1795.92V1479.00ZM1795.92 1479.00V1462.08H1798.01V1479.00ZM1798.01 1479.00V1450.28H1800.03V1479.00ZM1800.03 1479.00V1446.25H1801.97V1479.00ZM1801.97 1479.00V1458.05H1804.07V1479.00ZM1804.07 1479.00V1462.08H1806.01V1479.00ZM1806.01 1479.00V1464.10H1807.95V1479.00ZM1807.95 1479.00V1456.11H1810.05V1479.00ZM1810.05 1479.00V1462.08H1811.99V1479.00ZM1811.99 1479.00V1452.22H1816.10V1479.00ZM1816.10 1479.00V1446.25H1818.04V1479.00ZM1818.04 1479.00V1456.11H1820.14V1479.00ZM1820.14 1479.00V1440.19H1822.08V1479.00ZM1822.08 1479.00V1462.08H1824.10V1479.00ZM1824.10 1479.00V1474.12H1826.04V1479.00ZM1826.04 1479.00V1440.19H1827.98V1479.00ZM1827.98 1479.00V1458.05H1830.08V1479.00ZM1830.08 1479.00V1468.14H1834.04V1479.00ZM1834.04 1479.00V1462.08H1836.06V1479.00ZM1836.06 1479.00V1452.22H1839.94V1479.00ZM1839.94 1479.00V1470.08H1841.96V1479.00ZM1841.96 1479.00V1468.14H1844.05V1479.00ZM1844.05 1479.00V1464.10H1847.93V1479.00ZM1847.93 1479.00V1468.14H1852.50V1479.00ZM1852.50 1479.00V1468.14H1854.04V1479.00ZM1854.04 1479.00V1446.25H1856.06V1479.00ZM1856.06 1479.00V1450.28H1859.94V1479.00ZM1859.94 1479.00V1458.05H1862.03V1479.00ZM1862.03 1479.00V1464.10H1866.15V1479.00ZM1866.15 1479.00V1456.11H1868.01V1479.00ZM1868.01 1479.00V1464.10H1870.19V1479.00ZM1870.19 1479.00V1440.19H1872.13V1479.00ZM1872.13 1479.00V1474.12H1874.07V1479.00ZM1874.07 1479.00V1464.10H1876.01V1479.00ZM1876.01 1479.00V1468.14H1878.11V1479.00ZM1878.11 1479.00V1393.99H1880.05V1479.00ZM1880.05 1479.00V1422.18H1881.99V1479.00ZM1881.99 1479.00V1450.28H1884.01V1479.00ZM1884.01 1479.00V1464.10H1886.10V1479.00ZM1886.10 1479.00V1430.10H1888.04V1479.00ZM1888.04 1479.00V1462.08H1889.98V1479.00ZM1889.98 1479.00V1436.15H1892.08V1479.00ZM1892.08 1479.00V1464.10H1894.10V1479.00ZM1894.10 1479.00V1458.05H1896.20V1479.00ZM1896.20 1479.00V1440.19H1898.14V1479.00ZM1898.14 1479.00V1462.08H1900.08V1479.00ZM1900.08 1479.00V1470.08H1902.17V1479.00ZM1902.17 1479.00V1462.08H1906.06V1479.00ZM1906.06 1479.00V1470.08H1908.07V1479.00ZM1908.07 1479.00V1452.22H1910.17V1479.00ZM1910.17 1479.00V1458.05H1912.11V1479.00ZM1912.11 1479.00V1462.08H1914.05V1479.00ZM1914.05 1479.00V1458.05H1916.15V1479.00ZM1916.15 1479.00V1470.08H1918.17V1479.00ZM1918.17 1479.00V1468.14H1926.09V1479.00ZM1926.09 1479.00V1412.08H1928.03V1479.00ZM1928.03 1479.00V1456.11H1929.97V1479.00ZM1929.97 1479.00V1462.08H1932.07V1479.00ZM1932.07 1479.00V1468.14H1934.08V1479.00ZM1934.08 1479.00V1474.12H1936.02V1479.00ZM1936.02 1479.00V1424.12H1938.12V1479.00ZM1938.12 1479.00V1468.14H1940.06V1479.00ZM1940.06 1479.00V1464.10H1947.98V1479.00ZM1947.98 1479.00V1470.08H1950.16V1479.00ZM1950.16 1479.00V1468.14H1954.04V1479.00ZM1954.04 1479.00V1452.22H1955.98V1479.00ZM1955.98 1479.00V1470.08H1958.07V1479.00ZM1958.07 1479.00V1468.14H1960.02V1479.00ZM1960.02 1479.00V1450.28H1962.03V1479.00ZM1962.03 1479.00V1468.14H1963.98V1479.00ZM1963.98 1479.00V1474.12H1966.07V1479.00ZM1966.07 1479.00V1470.08H1970.11V1479.00ZM1970.11 1479.00V1468.14H1972.05V1479.00ZM1972.05 1479.00V1474.12H1973.99V1479.00ZM1973.99 1479.00V1468.14H1975.93V1479.00ZM1975.93 1479.00V1470.08H1977.95V1479.00ZM1977.95 1479.00V1468.14H1980.05V1479.00ZM1980.05 1479.00V1464.10H1981.99V1479.00ZM1981.99 1479.00V1462.08H1983.93V1479.00ZM1983.93 1479.00V1458.05H1986.02V1479.00ZM1986.02 1479.00V1450.28H1987.97V1479.00ZM1987.97 1479.00V1468.14H1989.98V1479.00ZM1989.98 1479.00V1464.10H1991.93V1479.00ZM1991.93 1479.00V1458.05H1994.02V1479.00ZM1994.02 1479.00V1462.08H1995.96V1479.00ZM1995.96 1479.00V1474.12H1997.90V1479.00ZM1997.90 1479.00V1458.05H2000.00V1479.00ZM2000.00 1479.00V1468.14H2003.96V1479.00ZM2003.96 1479.00V1470.08H2006.06V1479.00ZM2006.06 1479.00V1462.08H2008.00V1479.00ZM2008.00 1479.00V1470.08H2009.94V1479.00ZM2009.94 1479.00V1462.08H2012.03V1479.00ZM2012.03 1479.00V1468.14H2013.98V1479.00ZM2013.98 1479.00V1464.10H2018.09V1479.00ZM2018.09 1479.00V1456.11H2020.03V1479.00ZM2020.03 1479.00V1462.08H2021.97V1479.00ZM2021.97 1479.00V1474.12H2024.07V1479.00ZM2024.07 1479.00V1468.14H2026.01V1479.00ZM2026.01 1479.00V1462.08H2027.95V1479.00ZM2027.95 1479.00V1410.30H2029.97V1479.00ZM2029.97 1479.00V1464.10H2034.01V1479.00ZM2034.01 1479.00V1474.12H2035.95V1479.00ZM2035.95 1479.00V1468.14H2037.89V1479.00ZM2037.89 1479.00V1470.08H2039.98V1479.00ZM2039.98 1479.00V1468.14H2044.10V1479.00ZM2044.10 1479.00V1452.22H2046.04V1479.00ZM2046.04 1479.00V1400.20H2047.50V1479.00ZM2049.97 1479.00V1461.95H2052.04V1479.00ZM2052.04 1479.00V1456.04H2054.11V1479.00ZM2054.11 1479.00V1461.95H2056.19V1479.00ZM2056.19 1479.00V1467.85H2058.05V1479.00ZM2058.05 1479.00V1358.06H2060.02V1479.00ZM2060.02 1479.00V1456.04H2062.09V1479.00ZM2062.09 1479.00V1458.11H2064.16V1479.00ZM2064.16 1479.00V1434.29H2066.03V1479.00ZM2066.03 1479.00V1452.11H2070.06V1479.00ZM2070.06 1479.00V1450.04H2071.93V1479.00ZM2071.93 1479.00V1461.95H2074.00V1479.00ZM2074.00 1479.00V1450.04H2075.86V1479.00ZM2075.86 1479.00V1464.02H2080.21V1479.00ZM2080.21 1479.00V1461.95H2082.08V1479.00ZM2082.08 1479.00V1467.85H2084.05V1479.00ZM2084.05 1479.00V1450.04H2085.91V1479.00ZM2085.91 1479.00V1464.02H2092.13V1479.00ZM2092.13 1479.00V1458.11H2093.89V1479.00ZM2093.89 1479.00V1461.95H2098.03V1479.00ZM2098.03 1479.00V1456.04H2099.89V1479.00ZM2099.89 1479.00V1469.92H2101.97V1479.00ZM2101.97 1479.00V1461.95H2104.04V1479.00ZM2104.04 1479.00V1417.93H2105.90V1479.00ZM2105.90 1479.00V1452.11H2107.97V1479.00ZM2107.97 1479.00V1467.85H2110.04V1479.00ZM2110.04 1479.00V1461.95H2112.01V1479.00ZM2112.01 1479.00V1378.05H2113.88V1479.00ZM2113.88 1479.00V1473.86H2115.95V1479.00ZM2115.95 1479.00V1469.92H2118.02V1479.00ZM2118.02 1479.00V1464.02H2119.78V1479.00ZM2119.78 1479.00V1467.85H2121.85V1479.00ZM2121.85 1479.00V1469.92H2123.92V1479.00ZM2123.92 1479.00V1464.02H2129.93V1479.00ZM2129.93 1479.00V1452.11H2132.00V1479.00ZM2132.00 1479.00V1461.95H2136.14V1479.00ZM2136.14 1479.00V1452.11H2138.01V1479.00ZM2138.01 1479.00V1456.04H2140.08V1479.00ZM2140.08 1479.00V1444.03H2142.05V1479.00ZM2142.05 1479.00V1458.11H2144.12V1479.00ZM2144.12 1479.00V1436.05H2145.98V1479.00ZM2145.98 1479.00V1434.29H2150.13V1479.00ZM2150.13 1479.00V1467.85H2152.20V1479.00ZM2152.20 1479.00V1444.03H2154.27V1479.00ZM2154.27 1479.00V1469.92H2156.03V1479.00ZM2156.03 1479.00V1446.10H2158.10V1479.00ZM2158.10 1479.00V1458.11H2159.97V1479.00ZM2159.97 1479.00V1440.20H2162.04V1479.00ZM2162.04 1479.00V1456.04H2164.11V1479.00ZM2164.11 1479.00V1464.02H2168.05V1479.00ZM2168.05 1479.00V1440.20H2170.12V1479.00ZM2170.12 1479.00V1344.18H2172.08V1479.00ZM2172.08 1479.00V1469.92H2174.16V1479.00ZM2174.16 1479.00V1467.85H2176.02V1479.00ZM2176.02 1479.00V1446.10H2178.09V1479.00ZM2178.09 1479.00V1458.11H2180.16V1479.00ZM2180.16 1479.00V1467.85H2181.92V1479.00ZM2181.92 1479.00V1446.10H2184.00V1479.00ZM2184.00 1479.00V1461.95H2186.07V1479.00ZM2186.07 1479.00V1467.85H2187.93V1479.00ZM2187.93 1479.00V1464.02H2190.00V1479.00ZM2190.00 1479.00V1469.92H2192.07V1479.00ZM2192.07 1479.00V1473.86H2197.98V1479.00ZM2197.98 1479.00V1461.95H2200.05V1479.00ZM2200.05 1479.00V1464.02H2201.91V1479.00ZM2201.91 1479.00V1458.11H2203.98V1479.00ZM2203.98 1479.00V1461.95H2206.06V1479.00ZM2206.06 1479.00V1469.92H2210.20V1479.00ZM2210.20 1479.00V1467.85H2211.96V1479.00ZM2211.96 1479.00V1473.86H2217.97V1479.00ZM2217.97 1479.00V1469.92H2220.04V1479.00ZM2220.04 1479.00V1475.93H2229.88V1479.00ZM2229.88 1479.00V1473.86H2234.02V1479.00ZM2234.02 1479.00V1475.93H2235.89V1479.00ZM2235.89 1479.00V1469.92H2237.96V1479.00ZM2237.96 1479.00V1473.86H2241.79V1479.00ZM2241.79 1479.00V1469.92H2242.50V1479.00ZM2244.97 1479.00V1476.06H2249.94V1479.00ZM2249.94 1479.00V1474.12H2252.03V1479.00ZM2252.03 1479.00V1476.06H2253.98V1479.00ZM2253.98 1479.00V1474.12H2258.01V1479.00ZM2258.01 1479.00V1476.06H2262.13V1479.00ZM2262.13 1479.00V1474.12H2263.91V1479.00ZM2263.91 1479.00V1457.97H2266.01V1479.00ZM2266.01 1479.00V1474.12H2267.95V1479.00ZM2267.95 1479.00V1476.06H2269.89V1479.00ZM2269.89 1479.00V1470.08H2271.99V1479.00ZM2271.99 1479.00V1474.12H2273.93V1479.00ZM2273.93 1479.00V1476.06H2275.87V1479.00ZM2275.87 1479.00V1470.08H2277.89V1479.00ZM2277.89 1479.00V1474.12H2283.87V1479.00ZM2283.87 1479.00V1476.06H2285.81V1479.00ZM2287.98 1479.00V1474.12H2289.92V1479.00ZM2289.92 1479.00V1476.06H2291.86V1479.00ZM2291.86 1479.00V1467.91H2293.96V1479.00ZM2293.96 1479.00V1476.06H2303.82V1479.00ZM2305.84 1479.00V1476.06H2307.93V1479.00ZM2311.82 1479.00V1474.12H2313.91V1479.00ZM2313.91 1479.00V1476.06H2315.93V1479.00ZM2318.03 1479.00V1476.06H2319.97V1479.00ZM2324.01 1479.00V1476.06H2326.02V1479.00ZM2326.02 1479.00V1474.12H2328.12V1479.00ZM2328.12 1479.00V1476.06H2332.00V1479.00ZM2332.00 1479.00V1470.08H2333.94V1479.00ZM2333.94 1479.00V1476.06H2336.12V1479.00ZM2336.12 1479.00V1474.12H2337.98V1479.00ZM2337.98 1479.00V1476.06H2342.10V1479.00ZM2342.10 1479.00V1470.08H2344.04V1479.00ZM2344.04 1479.00V1474.12H2345.98V1479.00ZM2345.98 1479.00V1476.06H2347.92V1479.00ZM2347.92 1479.00V1474.12H2350.09V1479.00ZM2352.03 1479.00V1476.06H2354.13V1479.00ZM2354.13 1479.00V1474.12H2356.07V1479.00ZM2356.07 1479.00V1476.06H2358.01V1479.00ZM2358.01 1479.00V1470.08H2360.11V1479.00ZM2360.11 1479.00V1476.06H2362.05V1479.00ZM2362.05 1479.00V1474.12H2365.93V1479.00ZM2365.93 1479.00V1476.06H2369.81V1479.00ZM2371.99 1479.00V1474.12H2373.93V1479.00ZM2373.93 1479.00V1476.06H2375.87V1479.00ZM2375.87 1479.00V1470.08H2377.97V1479.00ZM2385.96 1479.00V1476.06H2387.90V1479.00ZM2393.88 1479.00V1474.12H2395.90V1479.00ZM2398.00 1479.00V1476.06H2399.94V1479.00ZM2403.82 1479.00V1474.12H2405.92V1479.00ZM2433.87 1479.00V1476.06H2435.81V1479.00ZM2460.08 1479.00V1476.22H2462.06V1479.00ZM2483.98 1479.00V1476.22H2485.96V1479.00ZM2526.09 1479.00V1476.22H2528.07V1479.00ZM2534.01 1479.00V1470.28H2535.99V1479.00ZM2592.10 1479.00V1476.22H2594.08V1479.00Z" fill="#3366cc"/>
<path d="M1660.7 1232V1479.6" stroke="#333333" stroke-width="2.6"/>
<path d="M1659.5 1478.6H2596" stroke="#333333" stroke-width="2.6"/>
</svg>
<div class="t" style="right:1203.5px;top:636.50px;font-size:23.5px;color:#444444;transform:scaleY(1.0);transform-origin:0 19.90px">100</div>
<div class="t" style="right:1203.5px;top:698.60px;font-size:23.5px;color:#444444;transform:scaleY(1.0);transform-origin:0 19.90px">75</div>
<div class="t" style="right:1203.5px;top:760.40px;font-size:23.5px;color:#444444;transform:scaleY(1.0);transform-origin:0 19.90px">50</div>
<div class="t" style="right:1203.5px;top:820.50px;font-size:23.5px;color:#444444;transform:scaleY(1.0);transform-origin:0 19.90px">25</div>
<div class="t" style="right:1203.5px;top:882.00px;font-size:23.5px;color:#444444;transform:scaleY(1.0);transform-origin:0 19.90px">0</div>
<div class="t" style="left:1625px;width:400px;text-align:center;top:905.20px;font-size:23.5px;color:#444444;transform:scaleY(1.0);transform-origin:0 19.90px">400</div>
<div class="t" style="left:1792.9px;width:400px;text-align:center;top:905.20px;font-size:23.5px;color:#444444;transform:scaleY(1.0);transform-origin:0 19.90px">800</div>
<div class="t" style="left:1959px;width:400px;text-align:center;top:905.20px;font-size:23.5px;color:#444444;transform:scaleY(1.0);transform-origin:0 19.90px">1,200</div>
<div class="t" style="left:2124.7px;width:400px;text-align:center;top:905.20px;font-size:23.5px;color:#444444;transform:scaleY(1.0);transform-origin:0 19.90px">1,600</div>
<div class="t" style="left:2292.5px;width:400px;text-align:center;top:905.20px;font-size:23.5px;color:#444444;transform:scaleY(1.0);transform-origin:0 19.90px">2,000</div>
<div class="t" style="left:1928.3000000000002px;width:400px;text-align:center;top:936.58px;font-size:24px;font-style:italic;color:#222">mm</div>
<div class="t" style="left:1346.5px;width:400px;text-align:center;top:756.7px;height:24px;line-height:24px;font-size:24px;font-style:italic;color:#222;transform:rotate(-90deg);transform-origin:200px 12px">Occurrence count</div>
<div class="t" style="right:1203.5px;top:1222.50px;font-size:23.5px;color:#444444;transform:scaleY(1.0);transform-origin:0 19.90px">80</div>
<div class="t" style="right:1203.5px;top:1284.10px;font-size:23.5px;color:#444444;transform:scaleY(1.0);transform-origin:0 19.90px">60</div>
<div class="t" style="right:1203.5px;top:1346.20px;font-size:23.5px;color:#444444;transform:scaleY(1.0);transform-origin:0 19.90px">40</div>
<div class="t" style="right:1203.5px;top:1406.10px;font-size:23.5px;color:#444444;transform:scaleY(1.0);transform-origin:0 19.90px">20</div>
<div class="t" style="right:1203.5px;top:1467.80px;font-size:23.5px;color:#444444;transform:scaleY(1.0);transform-origin:0 19.90px">0</div>
<div class="t" style="left:1512.6px;width:400px;text-align:center;top:1490.70px;font-size:23.5px;color:#444444;transform:scaleY(1.0);transform-origin:0 19.90px">20</div>
<div class="t" style="left:1734.8px;width:400px;text-align:center;top:1490.70px;font-size:23.5px;color:#444444;transform:scaleY(1.0);transform-origin:0 19.90px">60</div>
<div class="t" style="left:1955.3000000000002px;width:400px;text-align:center;top:1490.70px;font-size:23.5px;color:#444444;transform:scaleY(1.0);transform-origin:0 19.90px">100</div>
<div class="t" style="left:2174.7px;width:400px;text-align:center;top:1490.70px;font-size:23.5px;color:#444444;transform:scaleY(1.0);transform-origin:0 19.90px">140</div>
<div class="t" style="left:2394.7px;width:400px;text-align:center;top:1490.70px;font-size:23.5px;color:#444444;transform:scaleY(1.0);transform-origin:0 19.90px">180</div>
<div class="t" style="left:1928.3000000000002px;width:400px;text-align:center;top:1522.78px;font-size:24px;font-style:italic;color:#222">mm</div>
<div class="t" style="left:1353.6px;width:400px;text-align:center;top:1342.4px;height:24px;line-height:24px;font-size:24px;font-style:italic;color:#222;transform:rotate(-90deg);transform-origin:200px 12px">Occurrence count</div>

</body></html>
